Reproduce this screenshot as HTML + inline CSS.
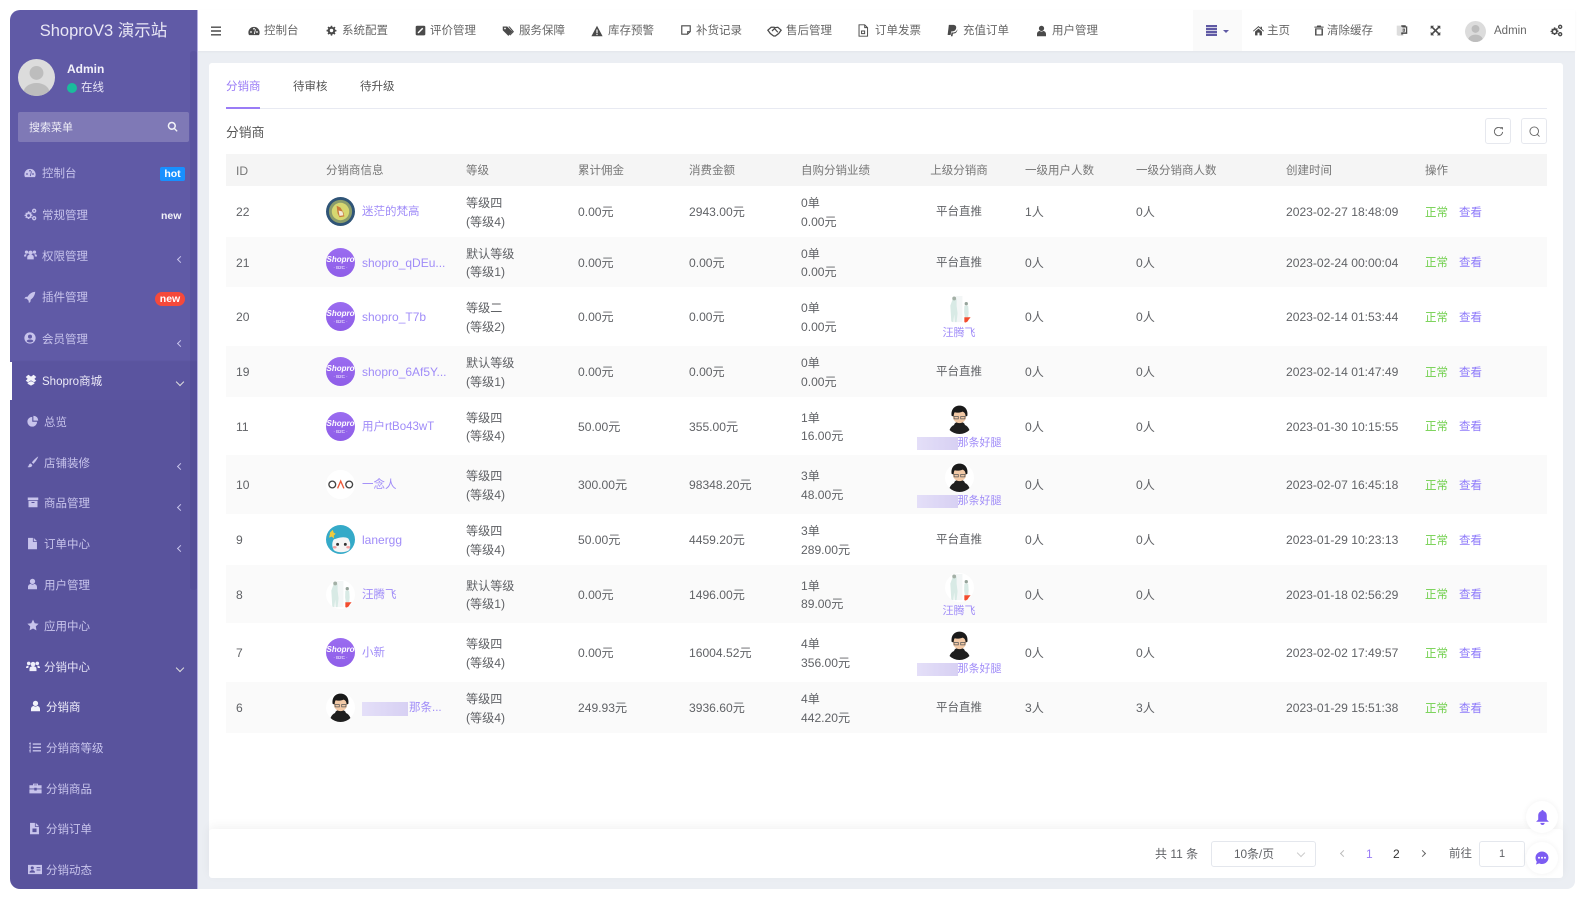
<!DOCTYPE html>
<html lang="zh-CN"><head><meta charset="utf-8"><title>ShoproV3 演示站</title>
<style>
*{box-sizing:border-box;margin:0;padding:0}
html,body{width:1585px;height:900px;overflow:hidden;background:#fff}
body{font-family:"Liberation Sans","Noto Sans CJK SC",sans-serif;font-size:12px;color:#606266}
#app{position:absolute;left:0;top:0;width:1585px;height:900px;overflow:hidden;filter:blur(.35px)}
.a{position:absolute;white-space:nowrap}
svg{display:block;fill:currentColor}
#main{position:absolute;left:198px;top:51px;width:1377px;height:838px;background:#ebeef3;border-radius:0 0 8px 0}
#head{position:absolute;left:198px;top:10px;width:1377px;height:41px;background:#fff;box-shadow:0 1px 2px rgba(0,0,0,.04)}
#side{position:absolute;left:10px;top:10px;width:188px;height:879px;background:linear-gradient(#605aa6 0,#605aa6 350px,#59539d 352px,#59539d 100%);border-radius:10px 0 0 10px;border-right:1px solid #b5b0e2;overflow:hidden}
#bar{position:absolute;right:0;top:41px;width:7px;height:539px;background:rgba(60,55,130,.16);border-radius:3px}
#act{position:absolute;left:0;top:352px;width:187px;height:38px;background:#5a549f;border-left:2px solid #fff}
.m{position:absolute;font-size:11.5px;line-height:16px;color:#c8c4ec;white-space:nowrap;margin-top:1px}
.i{position:absolute;color:#c8c4ec;margin-top:1px}
.chev{position:absolute;left:168px;width:5px;height:5px;border-left:1.2px solid #c8c4ec;border-bottom:1.2px solid #c8c4ec;transform:rotate(45deg)}
.down{position:absolute;left:167px;width:6px;height:6px;border-left:1.3px solid #ddd;border-bottom:1.3px solid #ddd;transform:rotate(-45deg);margin-top:-2px}
.n{position:absolute;top:23px;font-size:11.5px;line-height:16px;color:#666;white-space:nowrap}
.h{position:absolute;color:#4a4a4a}
#card{position:absolute;left:209px;top:63px;width:1354px;height:790px;background:#fff;border-radius:3px}
#pager{position:absolute;left:209px;top:829px;width:1354px;height:49px;background:#fff;border-radius:3px;box-shadow:0 -3px 10px rgba(0,0,0,.05)}
.tab{position:absolute;top:79px;font-size:11.5px;line-height:16px;color:#555}
table{position:absolute;left:226px;top:154px;width:1321px;border-collapse:collapse;table-layout:fixed;font-size:12.1px;line-height:18.5px;color:#606266}
th{height:32px;background:#f5f5f5;font-weight:normal;text-align:left;font-size:11.5px;color:#777;padding:2px 0 0}
td{padding:2px 0 0;vertical-align:middle}
tr.e td{background:#fafafa}
.id{padding-left:10px}
.u{display:flex;align-items:center;color:#a08cf8}
.u .av{margin-right:7px;margin-top:-2px}
.cn{font-size:11.5px}
.av{width:29px;height:29px;border-radius:50%;flex:none;overflow:hidden;background:#fff}
.sp{background:linear-gradient(#9a6cf0,#8f5ee8);color:#fff;font-style:italic;font-weight:bold;font-size:8px;line-height:9px;text-align:center;padding-top:7px}
.sp i{display:block;font-style:normal;font-weight:normal;font-size:4.5px;line-height:7px}
.pc{text-align:center;font-size:11.5px}
.pc .av{margin:0 auto}
.pc b{display:block;font-weight:normal;font-size:11px;line-height:13px;color:#a08cf8;margin-top:3px}
.bl{display:inline-block;vertical-align:top;background:linear-gradient(90deg,#e4dff8,#d7d0f3)}
.ok{color:#6fcf4a;margin-right:11px;font-size:11.5px}
.see{color:#8f7bfa;font-size:11.5px}
.btn{position:absolute;top:118px;width:26px;height:26px;border:1px solid #e6e8ee;border-radius:3px;background:#fff;color:#666}
.box{position:absolute;top:841px;height:26px;border:1px solid #e4e7ed;border-radius:3px;background:#fff}
.p{position:absolute;top:846px;line-height:16px;color:#606266;white-space:nowrap}
.float{position:absolute;left:1526px;width:32px;height:32px;border-radius:50%;background:#fff;box-shadow:0 0 6px rgba(0,0,0,.06);color:#7c5cf2}
</style></head><body>
<svg width="0" height="0" style="position:absolute">
<defs>
<symbol id="dash" viewBox="0 0 16 16"><path d="M8 2.5a7.5 7.5 0 0 0-7.5 7.5c0 1.500.4 2.600 1 3.500h13c.6-.9 1-2 1-3.500A7.500 7.500 0 0 0 8 2.500zM4 10.500a1.200 1.200 0 1 1 0-2.400 1.200 1.200 0 0 1 0 2.400zm3.800 1.500L9.500 5.500l1 .3L9 12.200zM8 6.200A1.200 1.200 0 1 1 8 3.800a1.200 1.200 0 0 1 0 2.400zm4 4.300a1.200 1.200 0 1 1 0-2.400 1.200 1.200 0 0 1 0 2.400z"/></symbol>
<symbol id="cog" viewBox="0 0 16 16"><path d="M7 1h2l.4 2 1.300.5 1.700-1.100 1.400 1.400-1.100 1.700.5 1.300 2 .4v2l-2 .4-.5 1.300 1.100 1.700-1.400 1.400-1.700-1.100-1.300.5-.4 2H7l-.4-2-1.300-.5-1.700 1.100-1.400-1.400 1.100-1.700-.5-1.300-2-.4V7l2-.4.5-1.300-1.100-1.700 1.400-1.400 1.700 1.100 1.300-.5zM8 5.500a2.500 2.500 0 1 0 0 5 2.500 2.500 0 0 0 0-5z"/></symbol>
<symbol id="cogs" viewBox="0 0 16 16"><path d="M5.500 4l1 .1.300 1.200.9.400 1-.6.800.8-.6 1 .4.900 1.200.3v1.500l-1.200.3-.4.9.6 1-.8.8-1-.6-.9.400-.3 1.200H4.700l-.3-1.200-.9-.4-1 .6-.8-.8.6-1-.4-.9L.700 10V8.500l1.200-.3.400-.9-.6-1 .8-.8 1 .6.900-.4.300-1.200zm.1 3.500a1.800 1.800 0 1 0 0 3.600 1.800 1.800 0 0 0 0-3.600zM12.500.8a2.700 2.700 0 1 1 0 5.400 2.700 2.700 0 0 1 0-5.400zm0 1.700a1 1 0 1 0 0 2 1 1 0 0 0 0-2zm0 7.300a2.700 2.700 0 1 1 0 5.400 2.700 2.700 0 0 1 0-5.400zm0 1.700a1 1 0 1 0 0 2 1 1 0 0 0 0-2z"/></symbol>
<symbol id="edit" viewBox="0 0 16 16"><path fill-rule="evenodd" d="M3 1h10a2 2 0 0 1 2 2v10a2 2 0 0 1-2 2H3a2 2 0 0 1-2-2V3a2 2 0 0 1 2-2zm7.500 3L4 10.500V12h1.500L12 5.500z"/></symbol>
<symbol id="tags" viewBox="0 0 16 16"><path fill-rule="evenodd" d="M1 2h6l7 7-5.500 5.500-7.500-7.500zm3 1.500a1.200 1.200 0 1 0 0 2.400 1.200 1.200 0 0 0 0-2.400z"/><path d="M8.500 2h1.700l5.800 7-5 5-.9-.9 4-4.100z"/></symbol>
<symbol id="warn" viewBox="0 0 16 16"><path fill-rule="evenodd" d="M8 1l7.500 14H.5zM7.200 6v5h1.600V6zm0 6v1.500h1.600V12z"/></symbol>
<symbol id="note" viewBox="1.500 1.500 13 13"><path fill="none" stroke="currentColor" stroke-width="1.500" d="M2.500 2.500h11V10l-3.500 3.500H2.500z"/><path d="M9.500 13.500V9.500h4v1.300h-2.700v2.700z"/></symbol>
<symbol id="shake" viewBox="0 0 18 14"><path fill="none" stroke="currentColor" stroke-width="1.500" d="M1 6l4-3.500h3.500L10 3l3-.5L17 6l-3 4-4 3H8L4 10zM6 7l3-3 4 4.500"/></symbol>
<symbol id="file" viewBox="2 0 13 16"><path fill="none" stroke="currentColor" stroke-width="1.200" d="M3 1h7l3.500 3.500V15H3zM10 1v3.500h3.500"/><path d="M5.500 8h5v4.500h-5zm1.200 1.200v2.100h2.600V9.200z"/></symbol>
<symbol id="pp" viewBox="2 0 13 16"><path d="M4 1h5c3 0 4.500 1.500 4 4-.5 2.800-2.500 4-5 4H7l-.8 4.500H2.500z"/><path d="M6.500 15l.8-4.500H9c2.700 0 4.700-1.300 5.300-4 .5 1.600-.6 5.300-4.800 5.300H9L8.500 15z"/></symbol>
<symbol id="user" viewBox="1 0 14 16"><circle cx="8" cy="4.500" r="3.500"/><path d="M2 15v-3c0-2.500 2-4 3.500-4 1.500 1 3.500 1 5 0C12 8 14 9.500 14 12v3z"/></symbol>
<symbol id="users" viewBox="0 0 18 16"><circle cx="9" cy="5" r="3"/><circle cx="3.500" cy="4" r="2.300"/><circle cx="14.500" cy="4" r="2.300"/><path d="M4.500 14v-3c0-2 1.500-3 2.500-3h4c1 0 2.500 1 2.500 3v3zM0 10c0-2 .8-3 2-3h2c-.8.600-1 1.500-1 3zM18 10c0-2-.8-3-2-3h-2c.8.600 1 1.500 1 3z"/></symbol>
<symbol id="ucirc" viewBox="0 0 16 16"><path fill-rule="evenodd" d="M8 .5a7.500 7.500 0 1 1 0 15 7.500 7.500 0 0 1 0-15zm0 3a2.700 2.700 0 1 0 0 5.400 2.700 2.700 0 0 0 0-5.400zM3.500 12.200C4.500 13.400 6.100 14 8 14s3.500-.6 4.500-1.800C12 10.500 10.500 10 8 10s-4 .5-4.500 2.200z"/></symbol>
<symbol id="rocket" viewBox="0 0 16 16"><path d="M15 1C10 1.500 7 4 5 7.500L2 8 .5 10l3.200.4 2.400 2.400.4 3.200 2-1.500.5-3C12 9.500 14.500 6 15 1z"/></symbol>
<symbol id="heart" viewBox="0 0 16 16"><path fill-rule="evenodd" d="M4.500 1L8 3.500 11.500 1 15 4l-2.500 2.500L15 9l-3 2-4-2.500L4 11 1 9l2.500-2.500L1 4zM3.500 11.700L8 9.500l4.500 2.200V13L8 15.500 3.500 13z"/></symbol>
<symbol id="pie" viewBox="0 0 16 16"><path d="M7 2.500A6.500 6.500 0 1 0 13.500 9H7z"/><path d="M8.500 1v6.500H15A6.500 6.500 0 0 0 8.500 1z"/></symbol>
<symbol id="brush" viewBox="0 0 16 16"><path d="M15 .5c-3 2-6.500 5-8.500 8l2 2c2.500-2.500 5.500-6.500 6.500-10zM5 10c-2.500.2-2.500 2.500-3 3.500-.3.600-1 1-1.500 1.200C3 15.500 7 15 7 12z"/></symbol>
<symbol id="box" viewBox="0 0 16 16"><path fill-rule="evenodd" d="M1 2h14v3.500H1zM2 6.500h12V15H2zm4 1.500v1.300h4V8z"/></symbol>
<symbol id="doc" viewBox="2 0 13 16"><path d="M3 1h6v5h5v9H3zM10 1l4 4h-4z"/></symbol>
<symbol id="doc2" viewBox="2 0 13 16"><path fill-rule="evenodd" d="M3 1h6v5h5v9H3zM10 1l4 4h-4zM6 8v4.500h5V8z"/></symbol>
<symbol id="star" viewBox="0 0 16 16"><path d="M8 .8l2.300 4.800 5.200.7-3.800 3.600.9 5.200L8 12.600l-4.600 2.500.9-5.200L.5 6.300l5.200-.7z"/></symbol>
<symbol id="list" viewBox="0 0 16 16"><path d="M5 2.500h11v1.800H5zM5 7h11v1.800H5zM5 11.500h11v1.800H5zM1 1h1v14H1zM0 2h2.500v1H0zM0 7h2.500v1H0zM0 12h2.500v1H0z"/></symbol>
<symbol id="case" viewBox="0 0 16 16"><path d="M5 2h6v2h4.500v4H9.500v-1h-3v1H.5V4H5zm1.200 1.200V4h3.600v-.8zM.5 9h6v1.500h3V9h6v5H.5z"/></symbol>
<symbol id="idc" viewBox="0 0 18 14"><path fill-rule="evenodd" d="M0 1h18v12H0zM5.500 3a2 2 0 1 0 0 4 2 2 0 0 0 0-4zM2 11h7c0-2-1.500-3-3.500-3S2 9 2 11zm9-7v1.300h5V4zm0 3v1.300h5V7z"/></symbol>
<symbol id="home" viewBox="0 0 16 16"><path d="M8 1.500l3 2.600V2.500h2v3.300l3 2.700-.8.900L8 3.300.8 9.400 0 8.500zM3 9.500l5-4.200 5 4.200V15H9.500v-4h-3v4H3z"/></symbol>
<symbol id="trash" viewBox="1 1 14 14"><path fill-rule="evenodd" d="M5.500 1h5l.7 1.500H14.500V4h-13V2.500h3.300zM2.500 5h11v10h-11zm2 1.500V13.500h7V6.500z"/></symbol>
<symbol id="exp" viewBox="0 0 16 16"><path d="M1 1h5L4.300 2.700 8 6.300l3.700-3.600L10 1h5v5l-1.700-1.700L9.700 8l3.600 3.700L15 10v5h-5l1.700-1.700L8 9.700l-3.700 3.600L6 15H1v-5l1.700 1.700L6.300 8 2.700 4.300 1 6z"/></symbol>
<symbol id="lang" viewBox="0 0 16 16"><path fill="#ddd" d="M1 1.500h8l1 1V15H3l-2-1z"/><path d="M7 1h6v1.500h2v10H9l-1 2-1-2V10.500h6.200V4H8.500V3H7zM9 5.500h3v4H9zm1 1v2h1v-2z"/></symbol>
<symbol id="srch" viewBox="0 0 16 16"><path fill-rule="evenodd" d="M7 1a6 6 0 0 1 4.800 9.600l3.700 3.700-1.400 1.400-3.700-3.700A6 6 0 1 1 7 1zm0 2.200a3.800 3.800 0 1 0 0 7.600 3.800 3.800 0 0 0 0-7.600z"/></symbol>
<symbol id="blank" viewBox="0 0 40 40"><rect width="40" height="40" fill="#dcdcdc"/><circle cx="20" cy="15" r="7.500" fill="#bdbdbd"/><ellipse cx="20" cy="36" rx="14" ry="10" fill="#bdbdbd"/></symbol>
<symbol id="man" viewBox="3 3 24 24"><rect x="3" y="3" width="24" height="24" fill="none"/><path fill="#1f1f1f" d="M15 17c-3 0-4 1-4.500 2.500C8 20.500 6.500 23 6 27c3 1.800 15 1.800 18 0-.5-4-2-6.500-4.500-7.500C19 18 18 17 15 17z"/><circle cx="15" cy="12.500" r="5.500" fill="#f2c9a6"/><path fill="#1a1a1a" d="M8.500 12c-.8-5.500 2.500-8.500 6.500-8.500s7.300 3 6.500 8.500l-1.500.5c0-2.500-1-3.500-2.500-4-2 1-5 1-6.500 .500-.7 1-.8 2.500-.8 3.500z"/><path fill="none" stroke="#555" stroke-width=".6" d="M10.500 12.500h3.500v2h-3.500zM16 12.500h3.500v2H16z"/></symbol>
<symbol id="mint" viewBox="0 0 30 30"><rect x="11" y="1" width="7" height="27" fill="#f3f6f6"/><path fill="#d8eae5" d="M8 4h4v7l1 8-1 9H10l-.5-8-.8 8H6.500L6 19l-.5-8z"/><circle cx="9.500" cy="3.500" r="2" fill="#a3b0a6"/><path fill="#d8eae5" d="M20 11h4l.5 7-.5 5h-3.500l-.7-5z"/><circle cx="22" cy="9" r="1.700" fill="#95a39a"/><path fill="#f24c2e" d="M20 23h6.500l-2 2.500-2 3.500-2.500-1z"/></symbol>
<symbol id="van" viewBox="0 0 30 30"><rect width="30" height="30" fill="#2f5477"/><circle cx="15" cy="15" r="12" fill="#8b9d6b"/><circle cx="15" cy="15" r="9" fill="#d7d870"/><path fill="#c97a3a" d="M11 9l4 2 3 5 1 4-5 1-2-4z"/><path fill="#f3ead8" d="M13 14l4 1 1 4-4 .5z"/></symbol>
<symbol id="gao" viewBox="0 0 30 30"><rect width="30" height="30" fill="#fff"/><circle cx="6.500" cy="15" r="3.500" fill="none" stroke="#444" stroke-width="1.400"/><circle cx="24" cy="15" r="3.500" fill="none" stroke="#444" stroke-width="1.400"/><path fill="none" stroke="#ee5a3a" stroke-width="1.400" d="M12 19l3.200-7.500L18.500 19"/></symbol>
<symbol id="lan" viewBox="0 0 30 30"><rect width="30" height="30" fill="#35aac8"/><path fill="#f5f5f5" d="M8 15c3-1 10-4 15-1 2 3 3 7 1 12-5 3-12 3-16 0-2-4-2-8 0-11z"/><circle cx="12" cy="20" r="1.500" fill="#333"/><circle cx="20" cy="20" r="1.500" fill="#333"/><ellipse cx="9" cy="23" rx="2" ry="1.300" fill="#f4a0a0"/><ellipse cx="23" cy="23" rx="2" ry="1.300" fill="#f4a0a0"/><path fill="#f0cb3c" d="M4 8l3-3 1 3 2 1-2 2 .5 3L6 12l-3 1 1-3z"/></symbol>
</defs></svg>
<div id="app">
<div id="main"></div>
<div id="head"></div>

<div id="side">
<div id="act"></div><div id="bar"></div>
<div class="a" style="left:0;top:11px;width:187px;text-align:center;font-size:16.500px;line-height:20px;color:#e9e7f5">ShoproV3 演示站</div>
<div class="a" style="left:8px;top:49px;width:37px;height:37px;border-radius:50%;overflow:hidden"><svg width="37" height="37"><use href="#blank"/></svg></div>
<div class="a" style="left:57px;top:51px;font-size:12px;font-weight:bold;line-height:16px;color:#f2f1fa">Admin</div>
<div class="a" style="left:57px;top:73px;width:10px;height:10px;border-radius:50%;background:#1abc9c"></div>
<div class="a" style="left:71px;top:70px;font-size:11.500px;line-height:16px;color:#e6e4f5">在线</div>
<div class="a" style="left:8px;top:102px;width:171px;height:30px;background:#7f79b6;border-radius:2px"></div>
<div class="a" style="left:19px;top:110px;font-size:11px;line-height:16px;color:#eeedf7">搜索菜单</div>
<svg class="i" style="left:157px;top:110px;color:#f3f3f8" width="11" height="11"><use href="#srch"/></svg>

<svg class="i" style="left:14px;top:156px" width="12" height="12"><use href="#dash"/></svg><div class="m" style="left:32px;top:155px">控制台</div>
<div class="a" style="left:150px;top:157px;width:25px;height:14px;border-radius:2px;background:#1890ff;color:#fff;font-size:10.500px;font-weight:bold;line-height:14px;text-align:center">hot</div>
<svg class="i" style="left:14px;top:197px" width="13" height="13"><use href="#cogs"/></svg><div class="m" style="left:32px;top:197px">常规管理</div>
<div class="a" style="left:151px;top:199px;color:#f2f2f8;font-size:10.500px;font-weight:bold;line-height:14px">new</div>
<svg class="i" style="left:14px;top:238px" width="13" height="12"><use href="#users"/></svg><div class="m" style="left:32px;top:238px">权限管理</div><div class="chev" style="top:247px"></div>
<svg class="i" style="left:14px;top:280px" width="12" height="12"><use href="#rocket"/></svg><div class="m" style="left:32px;top:279px">插件管理</div>
<div class="a" style="left:145px;top:282px;width:30px;height:14px;border-radius:7px;background:#f5493b;color:#fff;font-size:10.500px;font-weight:bold;line-height:14px;text-align:center">new</div>
<svg class="i" style="left:14px;top:321px" width="12" height="12"><use href="#ucirc"/></svg><div class="m" style="left:32px;top:321px">会员管理</div><div class="chev" style="top:331px"></div>
<svg class="i" style="left:15px;top:363px;color:#f2f2fa" width="12" height="12"><use href="#heart"/></svg><div class="m" style="left:32px;top:363px;color:#eceaf8">Shopro商城</div><div class="down" style="top:371px"></div>

<svg class="i" style="left:17px;top:404px" width="12" height="12"><use href="#pie"/></svg><div class="m" style="left:34px;top:404px">总览</div>
<svg class="i" style="left:17px;top:445px" width="12" height="12"><use href="#brush"/></svg><div class="m" style="left:34px;top:445px">店铺装修</div><div class="chev" style="top:454px"></div>
<svg class="i" style="left:17px;top:485px" width="12" height="12"><use href="#box"/></svg><div class="m" style="left:34px;top:485px">商品管理</div><div class="chev" style="top:495px"></div>
<svg class="i" style="left:17px;top:526px" width="11" height="13"><use href="#doc"/></svg><div class="m" style="left:34px;top:526px">订单中心</div><div class="chev" style="top:536px"></div>
<svg class="i" style="left:17px;top:567px" width="11" height="12"><use href="#user"/></svg><div class="m" style="left:34px;top:567px">用户管理</div>
<svg class="i" style="left:17px;top:608px" width="12" height="12"><use href="#star"/></svg><div class="m" style="left:34px;top:608px">应用中心</div>
<svg class="i" style="left:16px;top:649px;color:#eeeefa" width="14" height="13"><use href="#users"/></svg><div class="m" style="left:34px;top:649px;color:#e4e2f6">分销中心</div><div class="down" style="top:657px"></div>
<svg class="i" style="left:20px;top:689px;color:#f2f2fa" width="11" height="12"><use href="#user"/></svg><div class="m" style="left:36px;top:689px;color:#eeedfa">分销商</div>
<svg class="i" style="left:19px;top:730px" width="12" height="13"><use href="#list"/></svg><div class="m" style="left:36px;top:730px">分销商等级</div>
<svg class="i" style="left:19px;top:771px" width="13" height="13"><use href="#case"/></svg><div class="m" style="left:36px;top:771px">分销商品</div>
<svg class="i" style="left:19px;top:811px" width="11" height="13"><use href="#doc2"/></svg><div class="m" style="left:36px;top:811px">分销订单</div>
<svg class="i" style="left:18px;top:853px" width="14" height="11"><use href="#idc"/></svg><div class="m" style="left:36px;top:852px">分销动态</div>
</div>

<svg class="h" style="left:211px;top:26px" width="10" height="10" viewBox="0 0 10 10"><path d="M0 .5h10v1.400H0zM0 4.300h10v1.400H0zM0 8.100h10v1.400H0z"/></svg>
<svg class="h" style="left:248px;top:25px" width="12" height="12"><use href="#dash"/></svg><div class="n" style="left:264px">控制台</div>
<svg class="h" style="left:326px;top:25px" width="11" height="11"><use href="#cog"/></svg><div class="n" style="left:342px">系统配置</div>
<svg class="h" style="left:415px;top:25px" width="11" height="11"><use href="#edit"/></svg><div class="n" style="left:430px">评价管理</div>
<svg class="h" style="left:502px;top:25px" width="12" height="12"><use href="#tags"/></svg><div class="n" style="left:519px">服务保障</div>
<svg class="h" style="left:591px;top:25px" width="12" height="12"><use href="#warn"/></svg><div class="n" style="left:608px">库存预警</div>
<svg class="h" style="left:681px;top:25px" width="10" height="10"><use href="#note"/></svg><div class="n" style="left:696px">补货记录</div>
<svg class="h" style="left:767px;top:25px" width="15" height="12"><use href="#shake"/></svg><div class="n" style="left:786px">售后管理</div>
<svg class="h" style="left:858px;top:24px" width="11" height="13"><use href="#file"/></svg><div class="n" style="left:875px">订单发票</div>
<svg class="h" style="left:947px;top:24px" width="11" height="13"><use href="#pp"/></svg><div class="n" style="left:963px">充值订单</div>
<svg class="h" style="left:1036px;top:25px" width="11" height="12"><use href="#user"/></svg><div class="n" style="left:1052px">用户管理</div>

<div class="a" style="left:1193px;top:10px;width:49px;height:41px;background:#fafafa"></div>
<svg class="a" style="left:1206px;top:25px;color:#5f59a4" width="11" height="11" viewBox="0 0 11 11"><path d="M0 0h11v2.300H0zM0 3h11v2.300H0zM0 6h11v2.200H0zM0 8.900h11V11H0z"/></svg>
<div class="a" style="left:1223px;top:30px;border:3px solid transparent;border-top:3px solid #5f59a4"></div>
<svg class="h" style="left:1253px;top:25px" width="11" height="11"><use href="#home"/></svg><div class="n" style="left:1267px">主页</div>
<svg class="h" style="left:1314px;top:25px" width="10" height="11"><use href="#trash"/></svg><div class="n" style="left:1327px">清除缓存</div>
<svg class="h" style="left:1396px;top:24px" width="12" height="13"><use href="#lang"/></svg>
<svg class="h" style="left:1430px;top:25px" width="11" height="11"><use href="#exp"/></svg>
<div class="a" style="left:1465px;top:21px;width:21px;height:21px;border-radius:50%;overflow:hidden"><svg width="21" height="21"><use href="#blank"/></svg></div>
<div class="n" style="left:1494px">Admin</div>
<svg class="h" style="left:1550px;top:24px" width="13" height="13"><use href="#cogs"/></svg>

<div id="card"></div>
<div class="tab" style="left:226px;color:#9a7cf6">分销商</div>
<div class="tab" style="left:293px">待审核</div>
<div class="tab" style="left:360px">待升级</div>
<div class="a" style="left:226px;top:108px;width:1321px;height:1px;background:#e8eaf2"></div>
<div class="a" style="left:226px;top:107px;width:34px;height:2px;background:#9a7cf6"></div>
<div class="a" style="left:226px;top:124px;font-size:12.800px;line-height:18px;color:#555">分销商</div>
<div class="btn" style="left:1485px"><svg style="position:absolute;left:7px;top:7px" width="11" height="11" viewBox="0 0 12 12"><path fill="none" stroke="#666" stroke-width="1" d="M10.500 6.500a4.500 4.500 0 1 1-1.500-3.800"/><path fill="#666" d="M7.800 1.200h3v3z"/></svg></div>
<div class="btn" style="left:1521px"><svg style="position:absolute;left:7px;top:7px" width="11" height="11" viewBox="0 0 12 12"><circle cx="5.700" cy="5.700" r="4.700" fill="none" stroke="#666"/><path stroke="#666" d="M9 9l2.500 2.500"/></svg></div>

<table>
<colgroup><col style="width:100px"><col style="width:140px"><col style="width:112px"><col style="width:111px"><col style="width:112px"><col style="width:112px"><col style="width:92px"><col style="width:131px"><col style="width:150px"><col style="width:139px"><col style="width:122px"></colgroup>
<tr><th class="id" style="font-size:12.100px">ID</th><th>分销商信息</th><th>等级</th><th>累计佣金</th><th>消费金额</th><th>自购分销业绩</th><th class="pc">上级分销商</th><th style="padding-left:20px">一级用户人数</th><th>一级分销商人数</th><th>创建时间</th><th>操作</th></tr>

<tr style="height:51px"><td class="id">22</td><td><div class="u cn"><div class="av"><svg width="29" height="29"><use href="#van"/></svg></div>迷茫的梵高</div></td><td>等级四<br>(等级4)</td><td>0.00元</td><td>2943.00元</td><td>0单<br>0.00元</td><td class="pc">平台直推</td><td style="padding-left:20px">1人</td><td>0人</td><td>2023-02-27 18:48:09</td><td><span class="ok">正常</span><span class="see">查看</span></td></tr>

<tr class="e" style="height:50px"><td class="id">21</td><td><div class="u" style="font-size:12px"><div class="av sp">Shopro<i>· B2C ·</i></div>shopro_qDEu...</div></td><td>默认等级<br>(等级1)</td><td>0.00元</td><td>0.00元</td><td>0单<br>0.00元</td><td class="pc">平台直推</td><td style="padding-left:20px">0人</td><td>0人</td><td>2023-02-24 00:00:04</td><td><span class="ok">正常</span><span class="see">查看</span></td></tr>

<tr style="height:59px"><td class="id">20</td><td><div class="u" style="font-size:12px"><div class="av sp">Shopro<i>· B2C ·</i></div>shopro_T7b</div></td><td>等级二<br>(等级2)</td><td>0.00元</td><td>0.00元</td><td>0单<br>0.00元</td><td class="pc"><div class="av"><svg width="29" height="29"><use href="#mint"/></svg></div><b>汪腾飞</b></td><td style="padding-left:20px">0人</td><td>0人</td><td>2023-02-14 01:53:44</td><td><span class="ok">正常</span><span class="see">查看</span></td></tr>

<tr class="e" style="height:51px"><td class="id">19</td><td><div class="u" style="font-size:12px"><div class="av sp">Shopro<i>· B2C ·</i></div>shopro_6Af5Y...</div></td><td>默认等级<br>(等级1)</td><td>0.00元</td><td>0.00元</td><td>0单<br>0.00元</td><td class="pc">平台直推</td><td style="padding-left:20px">0人</td><td>0人</td><td>2023-02-14 01:47:49</td><td><span class="ok">正常</span><span class="see">查看</span></td></tr>

<tr style="height:58px"><td class="id">11</td><td><div class="u cn"><div class="av sp">Shopro<i>· B2C ·</i></div>用户rtBo43wT</div></td><td>等级四<br>(等级4)</td><td>50.00元</td><td>355.00元</td><td>1单<br>16.00元</td><td class="pc"><div class="av"><svg width="29" height="29"><use href="#man"/></svg></div><b><span class="bl" style="width:41px;height:13px"></span>那条好腿</b></td><td style="padding-left:20px">0人</td><td>0人</td><td>2023-01-30 10:15:55</td><td><span class="ok">正常</span><span class="see">查看</span></td></tr>

<tr class="e" style="height:59px"><td class="id">10</td><td><div class="u cn"><div class="av"><svg width="29" height="29"><use href="#gao"/></svg></div>一念人</div></td><td>等级四<br>(等级4)</td><td>300.00元</td><td>98348.20元</td><td>3单<br>48.00元</td><td class="pc"><div class="av"><svg width="29" height="29"><use href="#man"/></svg></div><b><span class="bl" style="width:41px;height:13px"></span>那条好腿</b></td><td style="padding-left:20px">0人</td><td>0人</td><td>2023-02-07 16:45:18</td><td><span class="ok">正常</span><span class="see">查看</span></td></tr>

<tr style="height:51px"><td class="id">9</td><td><div class="u" style="font-size:12px"><div class="av"><svg width="29" height="29"><use href="#lan"/></svg></div>lanergg</div></td><td>等级四<br>(等级4)</td><td>50.00元</td><td>4459.20元</td><td>3单<br>289.00元</td><td class="pc">平台直推</td><td style="padding-left:20px">0人</td><td>0人</td><td>2023-01-29 10:23:13</td><td><span class="ok">正常</span><span class="see">查看</span></td></tr>

<tr class="e" style="height:58px"><td class="id">8</td><td><div class="u cn"><div class="av"><svg width="29" height="29"><use href="#mint"/></svg></div>汪腾飞</div></td><td>默认等级<br>(等级1)</td><td>0.00元</td><td>1496.00元</td><td>1单<br>89.00元</td><td class="pc"><div class="av"><svg width="29" height="29"><use href="#mint"/></svg></div><b>汪腾飞</b></td><td style="padding-left:20px">0人</td><td>0人</td><td>2023-01-18 02:56:29</td><td><span class="ok">正常</span><span class="see">查看</span></td></tr>

<tr style="height:59px"><td class="id">7</td><td><div class="u cn"><div class="av sp">Shopro<i>· B2C ·</i></div>小新</div></td><td>等级四<br>(等级4)</td><td>0.00元</td><td>16004.52元</td><td>4单<br>356.00元</td><td class="pc"><div class="av"><svg width="29" height="29"><use href="#man"/></svg></div><b><span class="bl" style="width:41px;height:13px"></span>那条好腿</b></td><td style="padding-left:20px">0人</td><td>0人</td><td>2023-02-02 17:49:57</td><td><span class="ok">正常</span><span class="see">查看</span></td></tr>

<tr class="e" style="height:51px"><td class="id">6</td><td><div class="u cn"><div class="av"><svg width="29" height="29"><use href="#man"/></svg></div><span class="bl" style="width:46px;height:14px;margin-right:1px"></span>那条...</div></td><td>等级四<br>(等级4)</td><td>249.93元</td><td>3936.60元</td><td>4单<br>442.20元</td><td class="pc">平台直推</td><td style="padding-left:20px">3人</td><td>3人</td><td>2023-01-29 15:51:38</td><td><span class="ok">正常</span><span class="see">查看</span></td></tr>
</table>

<div id="pager"></div>
<div class="p" style="left:1155px;font-size:12px">共 11 条</div>
<div class="box" style="left:1211px;width:105px"></div>
<div class="p" style="left:1234px;font-size:11.800px">10条/页</div>
<div class="a" style="left:1298px;top:850px;width:6px;height:6px;border-left:1px solid #ccc;border-bottom:1px solid #ccc;transform:rotate(-45deg)"></div>
<div class="a" style="left:1341px;top:851px;width:5px;height:5px;border-left:1px solid #bbb;border-bottom:1px solid #bbb;transform:rotate(45deg)"></div>
<div class="p" style="left:1366px;color:#9a7cf6">1</div>
<div class="p" style="left:1393px;color:#333">2</div>
<div class="a" style="left:1420px;top:851px;width:5px;height:5px;border-right:1px solid #666;border-top:1px solid #666;transform:rotate(45deg)"></div>
<div class="p" style="left:1449px;font-size:11.500px">前往</div>
<div class="box" style="left:1479px;width:46px"></div>
<div class="p" style="left:1479px;width:46px;text-align:center;font-size:11px">1</div>

<div class="float" style="top:801px"><svg style="position:absolute;left:9.500px;top:8.500px" width="13" height="15" viewBox="0 0 12 14"><path d="M6 0c.8 0 1 .5 1 1 2 .5 3 2.200 3 4.200V9l2 2H0l2-2V5.200C2 3.200 3 1.500 5 1c0-.5.200-1 1-1zM4 12h4a2 2 0 0 1-4 0z"/></svg></div>
<div class="float" style="top:842px"><svg style="position:absolute;left:9px;top:9px" width="14" height="14" viewBox="0 0 14 14"><path fill-rule="evenodd" d="M7 .5c3.600 0 6.500 2.800 6.500 6.200S10.600 13 7 13c-1 0-2-.2-2.800-.6L1 13.500l.8-2.800C1 9.600.5 8.200.5 6.700.5 3.300 3.400.5 7 .5zM4 5.800a1 1 0 1 0 0 2 1 1 0 0 0 0-2zm3 0a1 1 0 1 0 0 2 1 1 0 0 0 0-2zm3 0a1 1 0 1 0 0 2 1 1 0 0 0 0-2z"/></svg></div>
</div>
</body></html>
